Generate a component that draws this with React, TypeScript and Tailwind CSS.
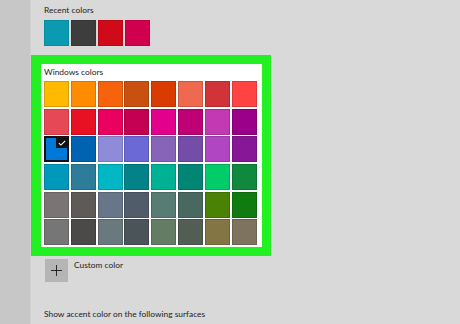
import React from "react";

const recentColors = ["#0a9bb3", "#3d3d3d", "#d10a19", "#d1004f"];

// Windows accent palette, 8 x 6
const windowsColors = [
  ["#ffb900", "#ff8c00", "#f7630c", "#ca5010", "#da3b01", "#ef6950", "#d13438", "#ff4343"],
  ["#e74856", "#e81123", "#ea005e", "#c30052", "#e3008c", "#bf0077", "#c239b3", "#9a0089"],
  ["#0078d7", "#0063b1", "#8e8cd8", "#6b69d6", "#8764b8", "#744da9", "#b146c2", "#881798"],
  ["#0099bc", "#2d7d9a", "#00b7c3", "#038387", "#00b294", "#018574", "#00cc6a", "#10893e"],
  ["#7a7574", "#5d5a58", "#68768a", "#515c6b", "#567c73", "#486860", "#498205", "#107c10"],
  ["#767676", "#4c4a48", "#69797e", "#4a5459", "#647c64", "#525e54", "#847545", "#7e735f"],
];

const Swatch: React.FC<{ color: string; selected?: boolean }> = ({ color, selected }) => (
  <div
    className={`relative w-[25px] h-[26px] ${selected ? "border-2 border-[#111]" : "border border-black/15"}`}
    style={{ backgroundColor: color }}
  >
    {selected && (
      <div className="absolute -top-[1px] -right-[1px] w-[12px] h-[11px] bg-[#111] flex items-center justify-center">
        <svg width="8" height="6" viewBox="0 0 8 6" fill="none">
          <path d="M0.8 3.2 L2.9 5.1 L7.2 0.8" stroke="white" strokeWidth="1.1" />
        </svg>
      </div>
    )}
  </div>
);

export default function App() {
  return (
    <div
      className="w-[460px] h-[324px] flex bg-[#d9d9d9] text-[#222] overflow-hidden"
      style={{ fontFamily: "Lato, 'Noto Sans', sans-serif" }}
    >
      {/* left nav strip */}
      <div className="w-[31px] shrink-0 bg-[#c7c7c7] border-r border-[#d2d2d2]" />

      <div className="flex flex-col">
        {/* Recent colors */}
        <div className="pl-[13px] pt-[4px]">
          <div className="text-[8.4px] leading-[13px]">Recent colors</div>
          <div className="flex gap-[2px] mt-[3px]">
            {recentColors.map((c) => (
              <div key={c} className="w-[25px] h-[26px] border border-black/10" style={{ backgroundColor: c }} />
            ))}
          </div>
        </div>

        {/* Windows colors, highlighted */}
        <div className="mt-[9px] w-[240px] border-[9px] border-l-[10px] border-[#22f022] bg-white pl-[3px] pt-[1px] pb-[2px]">
          <div className="text-[8.4px] leading-[15px] mb-[1px]">Windows colors</div>
          <div className="flex flex-col gap-[1.7px]">
            {windowsColors.map((row, r) => (
              <div key={r} className="flex gap-[1.8px]">
                {row.map((c, i) => (
                  <Swatch key={c} color={c} selected={r === 2 && i === 0} />
                ))}
              </div>
            ))}
          </div>
        </div>

        {/* Custom color */}
        <div className="flex items-start pl-[14px] mt-[3px]">
          <div className="w-[23px] h-[23px] bg-[#b5b5b5] flex items-center justify-center">
            <svg width="11" height="11" viewBox="0 0 11 11">
              <path d="M5.5 0 V11 M0 5.5 H11" stroke="#1a1a1a" strokeWidth="0.9" />
            </svg>
          </div>
          <div className="ml-[6px] text-[8.4px] leading-[12px]">Custom color</div>
        </div>

        {/* Accent surfaces */}
        <div className="pl-[13px] mt-[26px] text-[8.4px] leading-[12px]">
          Show accent color on the following surfaces
        </div>
      </div>
    </div>
  );
}
